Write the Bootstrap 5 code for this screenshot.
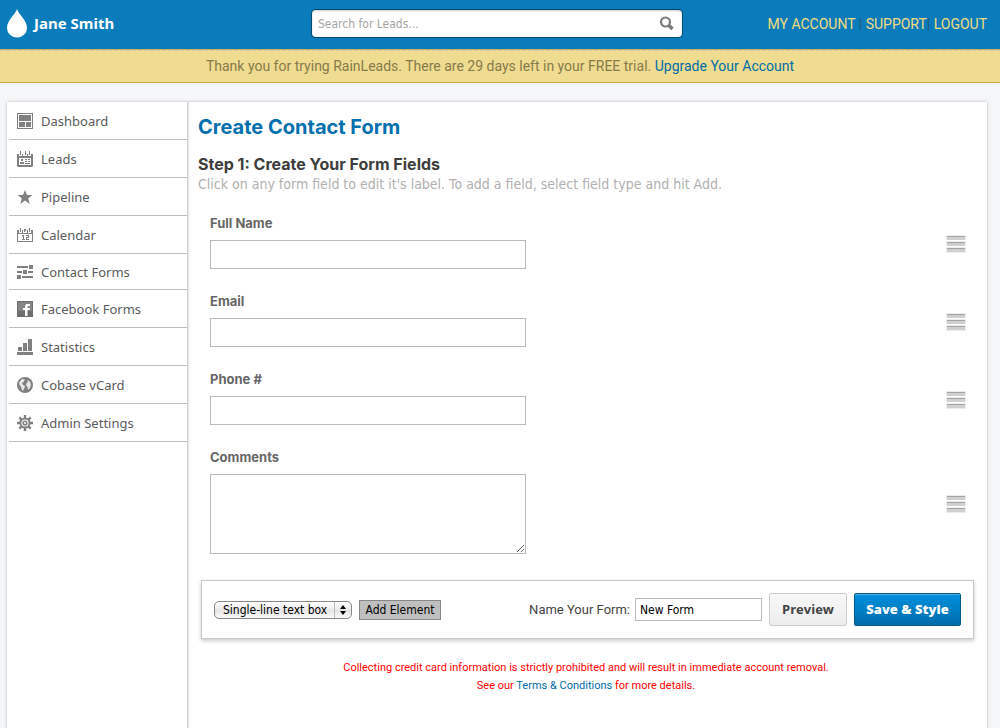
<!DOCTYPE html>
<html lang="en">
<head>
<meta charset="utf-8">
<meta name="viewport" content="width=device-width, initial-scale=1">
<title>Create Contact Form</title>
<link href="https://cdn.jsdelivr.net/npm/bootstrap@5.3.0/dist/css/bootstrap.min.css" rel="stylesheet">
<style>
  :root { --ui: "Noto Sans", "Open Sans", sans-serif; --body: Roboto, "Noto Sans", sans-serif; --head: Inter, "Noto Sans", sans-serif; --control: "DejaVu Sans Condensed", "DejaVu Sans", sans-serif; }
  body { background: #f5f6f8; font-family: var(--ui); font-size: 13px; color: #444; }
  a { color: #006da8; text-decoration: none; }

  .topbar { background: #0a7cbc; height: 49px; padding: 0 13px 2px 7px; }
  .side-col { flex: 1 1 0; }
  .brand-name { display: flex; width: max-content; font-size: 15px; font-weight: 700; color: #fff; gap: 7px; }
  .search-box { width: 372px; }
  .search-box .form-control { height: 29px; border: 1px solid #064a70; border-radius: 4px; padding: 0 36px 0 6px; font: 12px var(--control); box-shadow: inset 0 1px 2px #ccc; }
  .search-box .form-control::placeholder { color: #a5a5a5; }
  .search-box button { right: 7px; top: 6px; line-height: 0; }
  .account-links { font: 14px/20px var(--body); color: #2c566d; white-space: pre; }
  .account-links a { color: #f0dc7c; }

  .trial { background: #f0dc90; height: 34px; border-top: 1px solid #cfaf55; border-bottom: 1px solid #cbaa3c; font: 14px/30px var(--body); color: #857a4c; }
  .trial::before { content: ""; display: block; height: 1px; background: repeating-linear-gradient(90deg, #cfc6bb 0 4px, #f0dc90 4px 6px); }

  .page-wrap { margin: 19px 13px 0 7px; background: #fff; box-shadow: 0 0 3px #bbb; }
  .side-menu { width: 181px; border-right: 1px solid #d2d2d2; box-shadow: 1px 0 1px #e6e6e6; }
  .side-menu a { height: 38px; margin-left: 2px; padding: 2px 0 0 8px; gap: 8px; border-bottom: 1px solid #bebebe; color: #5b5b5b; }
  .side-menu a.short { height: 36px; }
  .side-menu svg { fill: #808080; flex: none; margin-bottom: 2px; }

  .main-area { padding: 13px 13px 40px 10px; min-width: 0; }
  h1 { font: 700 20px/24px var(--head); color: #006fae; margin: 0 0 15px; }
  h2 { font: 700 16px/20px var(--head); color: #3d3d3d; margin: 0; }
  .hint { font: 14px/20px var(--control); color: #b0b0b0; margin: 0 0 19px; }
  .field-row { padding: 0 8px 0 12px; margin-bottom: 22px; }
  .field-row label { display: block; font: 700 13px/21px var(--head); color: #666; margin-bottom: 6px; }
  .field-row .form-control { display: block; width: 316px; height: 29px; border: 1px solid #bbb; border-radius: 0; padding: 4px; font-size: 13px; }
  .field-row textarea.form-control { height: 80px; resize: both; }
  .grip { cursor: move; flex: none; margin-top: 6px; }

  .tool-box { margin: 26px 0 20px 3px; height: 59px; padding: 0 12px; gap: 7px; border: 1px solid #c8c8c8; box-shadow: 0 2px 4px #ccc; }
  .type-select { width: 138px; height: 18px; border: 1px solid #888; border-radius: 5px; padding: 0 0 0 8px; font: 12px/16px var(--control); color: #000; appearance: none;
    background: url("data:image/svg+xml,%3Csvg xmlns='http://www.w3.org/2000/svg' width='17' height='16'%3E%3Cpath d='M.5 0v16' stroke='%23bbb'/%3E%3Cpath d='M6 7l3-4 3 4zM6 9l3 4 3-4z'/%3E%3C/svg%3E") right center no-repeat, linear-gradient(#fff, #ececec 45%, #e4e4e4 50%, #fafafa); }
  .add-btn { width: 82px; height: 20px; padding: 0; border: 1px solid #878787; background: #bfbfbf; font: 12px/18px var(--control); color: #000; white-space: nowrap; }
  .name-label { font: 13px/20px var(--body); color: #444; margin-right: -2px; }
  .name-input { width: 127px; height: 23px; border: 1px solid #bbb; border-radius: 0; padding: 1px 4px 0; font: 12px var(--control); color: #000; }
  .act { height: 33px; padding: 0; border-radius: 2px; font: 800 13px/31px "Open Sans", var(--ui); }
  .act-preview, .act-preview:hover { width: 78px; border-color: #ccc; background: linear-gradient(#f8f8f8, #ededed); color: #444; font-weight: 700; }
  .act-save, .act-save:hover { width: 107px; border-color: #00588a; background: linear-gradient(#0090de, #006cab); box-shadow: inset 0 1px 0 #4eb1e6; color: #fff; }
  .notice { font: 11px/18px var(--body); color: #f00; }
</style>
</head>
<body class="d-flex flex-column min-vh-100">

<svg class="d-none" aria-hidden="true">
  <symbol id="grip" viewBox="0 0 20 18">
    <path fill="#eee" d="M0 0h20v18H0z"/><path fill="#fff" d="M0 5h20v1H0zM0 11h20v1H0z"/>
    <path fill="#d0d0d0" d="M1 1h18v4H1zM1 7h18v4H1zM1 13h18v4H1z"/>
    <path fill="#a4a4a4" d="M1 1h18v1H1zM1 7h18v1H1zM1 13h18v1H1z"/>
  </symbol>
</svg>

<header class="topbar d-flex align-items-center">
  <div class="side-col">
    <a href="#" class="brand-name align-items-center">
      <svg width="20" height="29" viewBox="0 0 20 29" fill="#fff"><path d="M10 0c1.500 5.500 10 11 10 19a10 9.500 0 0 1-20 0C0 11 8.500 5.500 10 0z"/></svg>
      <span>Jane Smith</span>
    </a>
  </div>
  <form class="search-box position-relative" role="search">
    <input type="search" class="form-control" placeholder="Search for Leads..." aria-label="Search for Leads">
    <button type="button" class="btn p-0 border-0 position-absolute" aria-label="Search">
      <svg width="18" height="18" viewBox="0 0 18 18" fill="none" stroke="#7d7d7d"><circle cx="7.500" cy="7" r="4.500" stroke-width="2.200"/><path d="M11 10.500l3.500 3.500" stroke-width="3.600"/></svg>
    </button>
  </form>
  <nav class="side-col account-links text-end" aria-label="Account"><a href="#">MY ACCOUNT</a> | <a href="#">SUPPORT</a>| <a href="#">LOGOUT</a></nav>
</header>

<div class="trial text-center">Thank you for trying RainLeads. There are 29 days left in your FREE trial. <a href="#">Upgrade Your Account</a></div>

<div class="page-wrap d-flex flex-grow-1">
  <nav class="side-menu flex-shrink-0 nav flex-column flex-nowrap" aria-label="Main">
    <a href="#" class="d-flex align-items-center"><svg width="16" height="16" viewBox="0 0 16 16"><path fill-rule="evenodd" d="M0 0h16v16H0zM1 1v14h14V1z"/><path d="M2 2h12v6H2zM2 9h6v5H2zM9 9h5v5H9z"/></svg>Dashboard</a>
    <a href="#" class="d-flex align-items-center"><svg width="16" height="16" viewBox="0 0 16 16"><path fill-rule="evenodd" d="M0 3h2v2h3V3h1v2h4V3h1v2h3V3h2v12l-1 1H1l-1-1zM2 7v7h12V7z"/><path d="M3 0h1v4H3zM8 0h1v4H8zM12 0h1v4h-1zM4 8h2v2H4zM3 11h4v2H3zM8 8h2v1H8zM11 8h2v1h-2zM8 10h2v1H8zM11 10h2v1h-2zM8 12h5v1H8z"/></svg>Leads</a>
    <a href="#" class="d-flex align-items-center"><svg width="16" height="16" viewBox="0 0 16 16"><path d="M8 1l2 5h5.500l-4.300 3.300L12.700 15 8 11.500 3.300 15l1.500-5.700L.5 6H6z"/></svg>Pipeline</a>
    <a href="#" class="d-flex align-items-center"><svg width="16" height="16" viewBox="0 0 16 16"><path fill-rule="evenodd" d="M0 3h2v3h3V3h1v3h4V3h1v3h3V3h2v12H0zM1 7v7h14V7z"/><path d="M3 1h1v4H3zM7 2h1v3H7zM8 2h1v2H8zM12 1h1v4h-1zM5 8h2v4h1v1H5v-1h1V9H5zM9 8h3v3h-2v1h2v1H9v-3h2V9H9z"/></svg>Calendar</a>
    <a href="#" class="short d-flex align-items-center"><svg width="16" height="16" viewBox="0 0 16 16"><path d="M0 2h11v2H0zM12 1h4v4h-4zM0 7h5v2H0zM6 6h4v4H6zM11 7h5v2h-5zM0 11h4v4H0zM5 12h11v2H5z"/></svg>Contact Forms</a>
    <a href="#" class="d-flex align-items-center"><svg width="16" height="16" viewBox="0 0 16 16"><path fill="#6e6e6e" d="M0 0h16v16H0z"/><path fill="#858585" d="M1 1h14v9H1z"/><path fill="#fff" d="M8 15V9H6V7h2V5.500C8 3.500 9 3 11 3h2v2h-1.500C10.500 5 10.500 5.500 10.500 7H13l-.3 2h-2.200v6z"/></svg>Facebook Forms</a>
    <a href="#" class="d-flex align-items-center"><svg width="16" height="16" viewBox="0 0 16 16"><path d="M0 13h16v3H0zM1 8h4v4H1zM6 4h4v8H6zM11 0h4v12h-4z"/></svg>Statistics</a>
    <a href="#" class="d-flex align-items-center"><svg width="16" height="16" viewBox="0 0 16 16"><circle cx="8" cy="8" r="8"/><path fill="#fff" d="M5 2l3 .5L6.500 5 5 6l1 2 2 1-.5 2L6 14l-1.500-2L4 9.500 2.500 8 2 5.500zM10 3l3 1.500 1 3L13 11l-2 2-.5-3L9 8.500 9.500 6l1.500-1z" opacity=".8"/></svg>Cobase vCard</a>
    <a href="#" class="d-flex align-items-center"><svg width="16" height="16" viewBox="0 0 16 16"><g fill="none" stroke="#808080"><circle cx="8" cy="8" r="4.600" stroke-width="2"/><circle cx="8" cy="8" r="1.800" stroke-width="1.600"/><path d="M8 0v3M8 13v3M0 8h3M13 8h3M2.300 2.300l2.200 2.200M11.500 11.500l2.200 2.200M13.700 2.300l-2.200 2.200M4.500 11.500l-2.200 2.200" stroke-width="2.400"/></g></svg>Admin Settings</a>
  </nav>

  <main class="main-area flex-grow-1">
    <h1>Create Contact Form</h1>
    <h2>Step 1: Create Your Form Fields</h2>
    <p class="hint">Click on any form field to edit it's label. To add a field, select field type and hit Add.</p>

    <form>
      <div class="field-row d-flex justify-content-between align-items-center">
        <div><label for="full-name">Full Name</label><input id="full-name" type="text" class="form-control"></div>
        <svg class="grip" width="20" height="18"><use href="#grip"/></svg>
      </div>
      <div class="field-row d-flex justify-content-between align-items-center">
        <div><label for="email">Email</label><input id="email" type="email" class="form-control"></div>
        <svg class="grip" width="20" height="18"><use href="#grip"/></svg>
      </div>
      <div class="field-row d-flex justify-content-between align-items-center">
        <div><label for="phone">Phone #</label><input id="phone" type="tel" class="form-control"></div>
        <svg class="grip" width="20" height="18"><use href="#grip"/></svg>
      </div>
      <div class="field-row d-flex justify-content-between align-items-center">
        <div><label for="comments">Comments</label><textarea id="comments" class="form-control"></textarea></div>
        <svg class="grip" width="20" height="18"><use href="#grip"/></svg>
      </div>

      <div class="tool-box d-flex align-items-center">
        <select class="type-select" aria-label="Field type"><option>Single-line text box</option></select>
        <button type="button" class="add-btn">Add Element</button>
        <label for="form-name" class="name-label ms-auto">Name Your Form:</label>
        <input id="form-name" type="text" class="name-input" value="New Form">
        <button type="button" class="btn act act-preview">Preview</button>
        <button type="submit" class="btn act act-save">Save &amp; Style</button>
      </div>
    </form>

    <p class="notice text-center mb-0">Collecting credit card information is strictly prohibited and will result in immediate account removal.<br>See our <a href="#">Terms &amp; Conditions</a> for more details.</p>
  </main>
</div>

<script src="https://cdn.jsdelivr.net/npm/bootstrap@5.3.0/dist/js/bootstrap.bundle.min.js"></script>
</body>
</html>
